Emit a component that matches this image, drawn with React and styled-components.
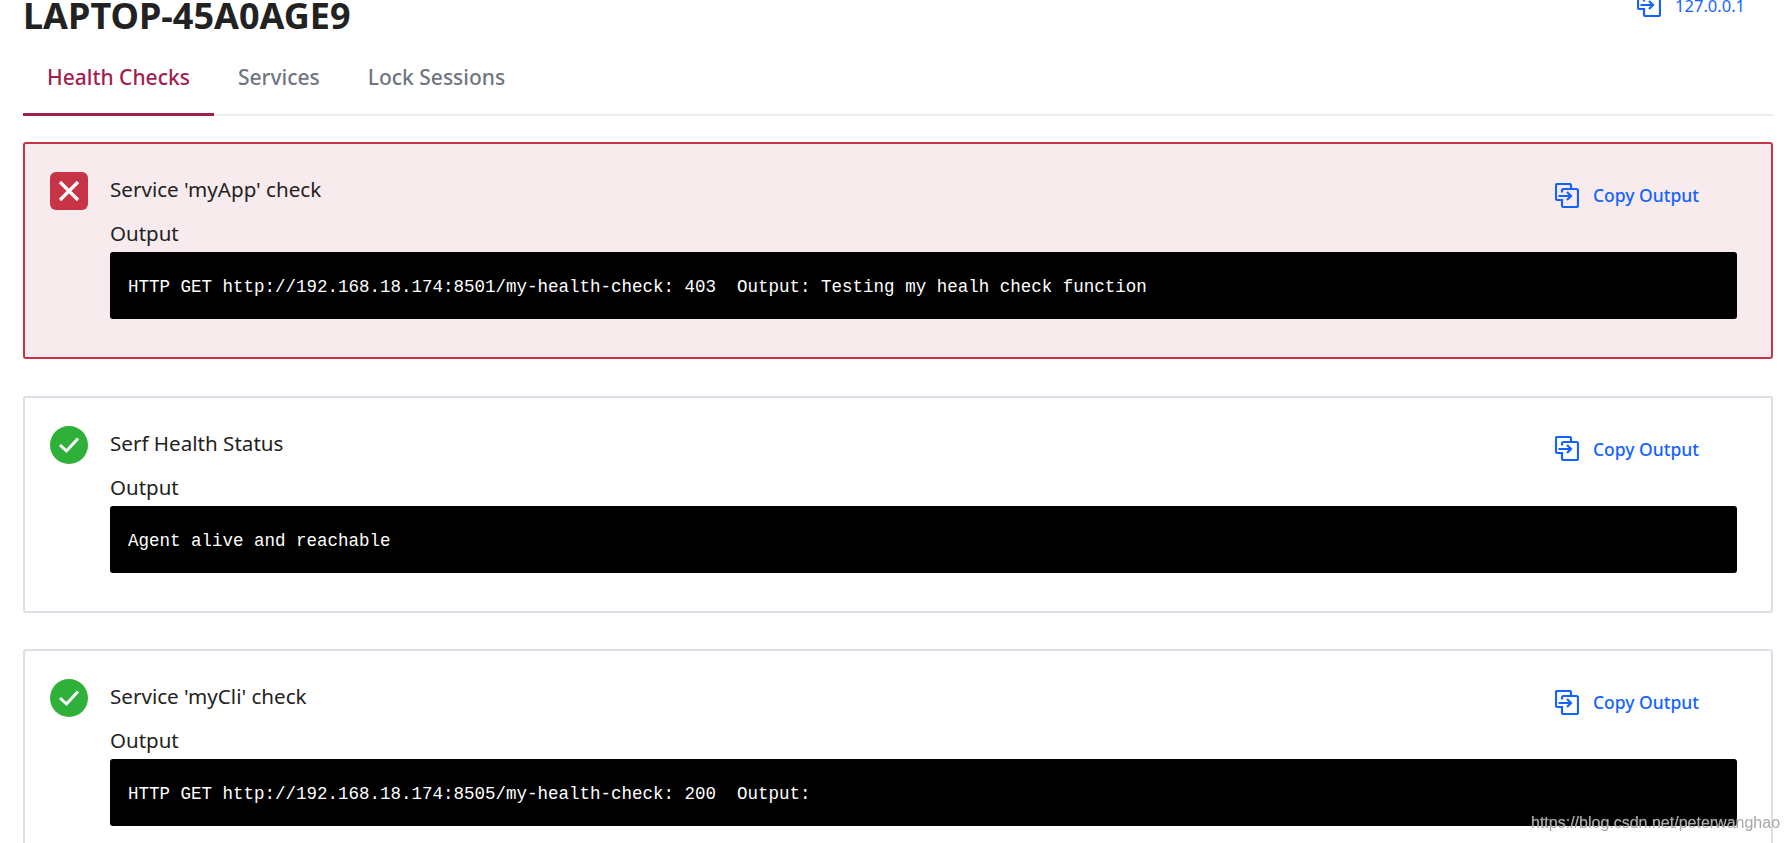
import React from 'react';
import styled, { createGlobalStyle } from 'styled-components';

const checks = [
  {
    name: "Service 'myApp' check",
    failed: true,
    output: 'HTTP GET http://192.168.18.174:8501/my-health-check: 403  Output: Testing my healh check function',
  },
  { name: 'Serf Health Status', output: 'Agent alive and reachable' },
  {
    name: "Service 'myCli' check",
    output: 'HTTP GET http://192.168.18.174:8505/my-health-check: 200  Output:',
  },
];

const GlobalStyle = createGlobalStyle`
  html, body {
    margin: 0;
    height: 843px;
    overflow: hidden;
    background: #fff;
    font-family: "Noto Sans", "Open Sans", sans-serif;
  }
  * {
    box-sizing: border-box;
  }
`;

const Page = styled.div`
  padding: 0 15px 0 23px;
  height: 843px;
  overflow: hidden;
`;

const Header = styled.header`
  display: flex;
  justify-content: space-between;
  align-items: flex-start;
  height: 51px;
  margin-top: -9px;
`;

const Title = styled.h1`
  margin: 0;
  font-size: 36px;
  line-height: 50px;
  font-weight: 700;
  color: #222222;
`;

const Address = styled.a`
  display: flex;
  align-items: center;
  gap: 14px;
  margin: 1px 28px 0 0;
  font-size: 16.5px;
  line-height: 28px;
  color: #1563ff;

  svg {
    margin-top: -4px;
  }
`;

const Tabs = styled.nav`
  display: flex;
  height: 74px;
  border-bottom: 2px solid #ebeef2;
`;

const Tab = styled.a`
  height: 74px;
  padding: 0 24px;
  font-size: 21px;
  font-weight: 500;
  line-height: 70px;
  color: ${(p) => (p.$active ? '#a01f4f' : '#6f7682')};
  border-bottom: ${(p) => (p.$active ? '3px solid #a01f4f' : 'none')};
`;

const CardList = styled.main`
  display: flex;
  flex-direction: column;
  gap: 36.5px;
  margin-top: 26px;
`;

const Card = styled.section`
  display: grid;
  grid-template-columns: 38px 1fr;
  column-gap: 22px;
  padding: 28px 34px 38px 25px;
  border: 2px solid ${(p) => (p.$failed ? '#c73445' : '#dce0e6')};
  border-radius: 3px;
  background: ${(p) => (p.$failed ? '#f8ebee' : '#fff')};
`;

const StatusIcon = styled.div`
  display: flex;
  align-items: center;
  justify-content: center;
  width: 38px;
  height: 38px;
  border-radius: ${(p) => (p.$failed ? '6px' : '50%')};
  background: ${(p) => (p.$failed ? '#c73445' : '#2eb039')};
`;

const CardBody = styled.div`
  min-width: 0;
`;

const CardHead = styled.div`
  display: flex;
  justify-content: space-between;
  height: 33px;
`;

const CheckName = styled.h3`
  margin: 0;
  padding-top: 1px;
  font-size: 20.6px;
  line-height: 33px;
  font-weight: 400;
  color: #222222;
`;

const CopyButton = styled.button`
  display: flex;
  align-items: center;
  gap: 14px;
  height: 32px;
  margin: 7px 38px 0 0;
  padding: 0;
  border: 0;
  background: none;
  font: 500 17.5px "Noto Sans", "Open Sans", sans-serif;
  color: #1563ff;
`;

const OutputLabel = styled.div`
  margin-top: 14px;
  font-size: 20.5px;
  line-height: 28px;
  font-weight: 400;
  color: #222222;
`;

const OutputText = styled.pre`
  margin: 5px 0 0;
  padding: 3px 18px 0;
  height: 67px;
  border-radius: 3px;
  background: #000;
  color: #fff;
  font-family: "Liberation Mono", monospace;
  font-size: 17.5px;
  line-height: 65px;
`;

const Watermark = styled.div`
  position: fixed;
  left: 1531px;
  top: 812px;
  font-family: "Liberation Sans", Arial, sans-serif;
  font-size: 16px;
  line-height: 22px;
  color: #a8a8a8;
  text-shadow: 0 0 1px rgba(255, 255, 255, 0.5);
`;

const CopyIcon = () => (
  <svg width="24" height="25" viewBox="0 0 24 25" fill="none" stroke="#1563ff" strokeWidth="2.2">
    <path d="M16 5.500V2.500A1.500 1.500 0 0 0 14.500 1H2.500A1.500 1.500 0 0 0 1 2.500V15.500A1.500 1.500 0 0 0 2.500 17H6.500" />
    <path d="M7 9.500V7.500A1.500 1.500 0 0 1 8.500 6H21.500A1.500 1.500 0 0 1 23 7.500V22.500A1.500 1.500 0 0 1 21.500 24H8.500A1.500 1.500 0 0 1 7 22.500V16" />
    <path d="M3.500 13H15.500M12 9L16 13L12 17" />
  </svg>
);

const CrossIcon = () => (
  <svg width="22" height="22" viewBox="0 0 22 22" fill="none" stroke="#fff" strokeWidth="3.200">
    <path d="M2 2L20 20M20 2L2 20" />
  </svg>
);

const TickIcon = () => (
  <svg width="22" height="18" viewBox="0 0 22 18" fill="none" stroke="#fff" strokeWidth="3">
    <path d="M2 9L8.500 15L20 2.500" />
  </svg>
);

const App = () => (
  <>
    <GlobalStyle />
    <Page>
      <Header>
        <Title>LAPTOP-45A0AGE9</Title>
        <Address>
          <CopyIcon />
          127.0.0.1
        </Address>
      </Header>
      <Tabs>
        <Tab $active>Health Checks</Tab>
        <Tab>Services</Tab>
        <Tab>Lock Sessions</Tab>
      </Tabs>
      <CardList>
        {checks.map((check) => (
          <Card key={check.name} $failed={check.failed}>
            <StatusIcon $failed={check.failed}>
              {check.failed ? <CrossIcon /> : <TickIcon />}
            </StatusIcon>
            <CardBody>
              <CardHead>
                <CheckName>{check.name}</CheckName>
                <CopyButton>
                  <CopyIcon />
                  Copy Output
                </CopyButton>
              </CardHead>
              <OutputLabel>Output</OutputLabel>
              <OutputText>{check.output}</OutputText>
            </CardBody>
          </Card>
        ))}
      </CardList>
    </Page>
    <Watermark>https://blog.csdn.net/peterwanghao</Watermark>
  </>
);

export default App;
